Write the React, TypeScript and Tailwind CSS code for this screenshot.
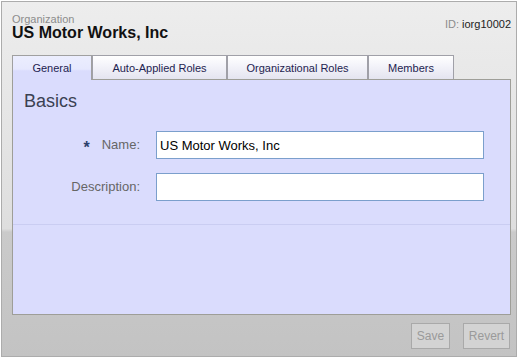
const tabs = [
  { label: "General", width: "w-[80px]", active: true },
  { label: "Auto-Applied Roles", width: "w-[135px]", active: false },
  { label: "Organizational Roles", width: "w-[141px]", active: false },
  { label: "Members", width: "w-[86px]", active: false },
]

export default function App() {
  return (
    <div className="w-[519px] h-[359px] bg-white pt-px pl-px font-['Liberation_Sans',Arial,sans-serif]">
      <div className="w-[516px] h-[356px] border border-[#acacac] bg-[linear-gradient(to_bottom,#ededed_0%,#dedede_64%,#cacaca_65%,#c3c3c3_100%)] pl-[10px] pr-[5px] flex flex-col">
        {/* Header */}
        <div className="h-[53px] pt-[12px] flex justify-between">
          <div>
            <div className="text-[11px] leading-[11px] text-[#8c8c8c]">Organization</div>
            <div className="text-[16px] leading-[16px] font-bold text-[#111]">US Motor Works, Inc</div>
          </div>
          <div className="mt-[5px] text-[11px] leading-[11px]">
            <span className="text-[#8c8c8c]">ID: </span>
            <span className="text-[#222]">iorg10002</span>
          </div>
        </div>

        {/* Tabs */}
        <div className="h-[24px] flex items-start relative z-10">
          {tabs.map((t) => (
            <div
              key={t.label}
              className={
                t.active
                  ? `${t.width} h-[25px] border-t border-l border-r border-[#a0a0a0] bg-[linear-gradient(to_bottom,#eceefe_0%,#e6e8fe_55%,#dadcfd_62%,#dadcfd_100%)] flex items-center justify-center text-[11px] text-[#1e2350]`
                  : `${t.width} h-[24px] border-t border-l border-r border-[#a0a0a8] bg-[linear-gradient(to_bottom,#ffffff_0%,#f4f4fa_40%,#e4e4f0_100%)] flex items-center justify-center text-[11px] text-[#1e2350]`
              }
            >
              <span className="pt-px">{t.label}</span>
            </div>
          ))}
        </div>

        {/* Panel */}
        <div className="h-[236px] border border-[#9e9e98] bg-[#dadcfd] flex flex-col">
          <div className="pt-[11px] pl-[11px] text-[18px] leading-[20px] text-[#3a4152]">Basics</div>
          <div className="mt-[20px] flex flex-col gap-[14px]">
            <div className="h-[28px] flex items-center">
              <div className="w-[127px] flex justify-end items-center text-[13px] text-[#666]">
                <span className="text-[16px] leading-none font-bold text-[#2c406c] translate-y-[3px] mr-[12px]">*</span>
                <span>Name:</span>
              </div>
              <input
                readOnly
                defaultValue="US Motor Works, Inc"
                className="ml-[16px] w-[328px] h-[28px] border border-[#7b9fcc] bg-white px-[3px] text-[13px] text-black outline-none"
              />
            </div>
            <div className="h-[28px] flex items-center">
              <div className="w-[127px] text-right text-[13px] text-[#666]">Description:</div>
              <input
                readOnly
                defaultValue=""
                className="ml-[16px] w-[328px] h-[28px] border border-[#7b9fcc] bg-white px-[3px] text-[13px] text-black outline-none"
              />
            </div>
          </div>
          <div className="mt-[23px] h-px bg-[#cacdf2]" />
        </div>

        {/* Footer buttons */}
        <div className="mt-[8px] pr-px flex justify-end gap-[13px]">
          <button className="w-[39px] h-[26px] border border-[#a9a9a9] bg-[#d3d3d3] text-[12px] text-[#9a9a9a]">Save</button>
          <button className="w-[47px] h-[26px] border border-[#a9a9a9] bg-[#d3d3d3] text-[12px] text-[#9a9a9a]">Revert</button>
        </div>
      </div>
    </div>
  )
}
